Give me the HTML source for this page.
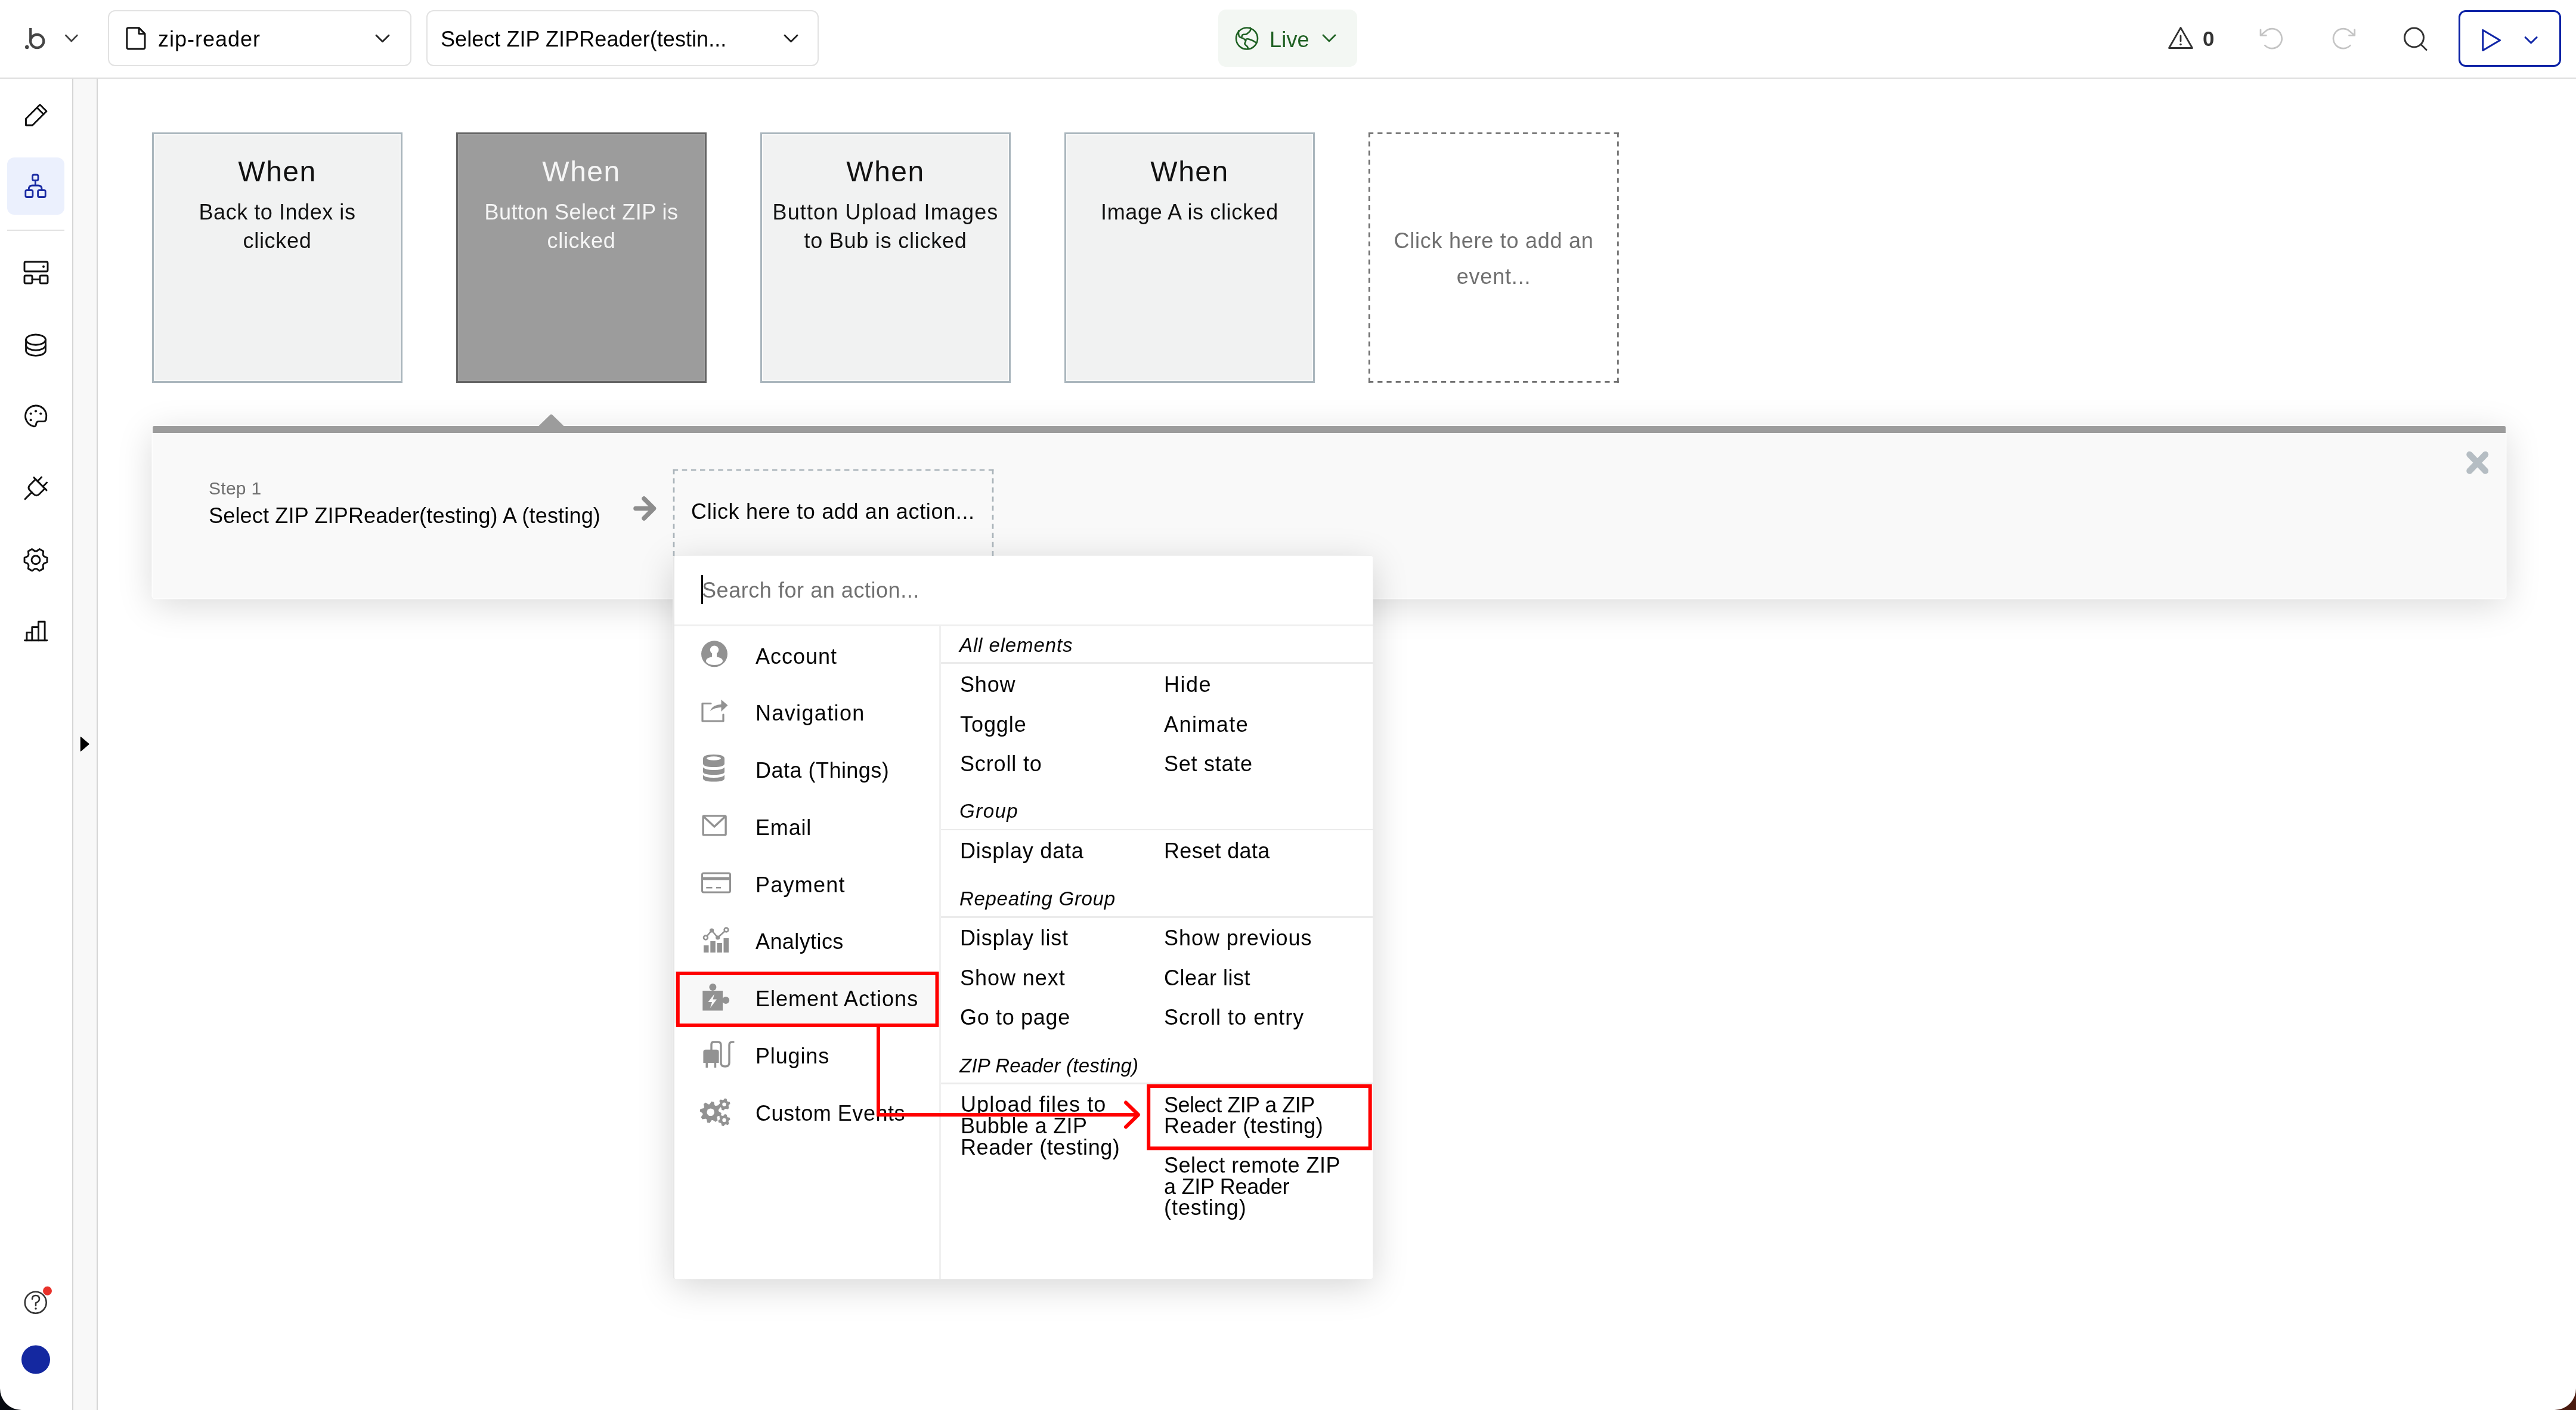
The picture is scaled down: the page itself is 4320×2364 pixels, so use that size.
<!DOCTYPE html>
<html><head><meta charset="utf-8"><style>
html,body{margin:0;padding:0;}
body{width:4320px;height:2364px;overflow:hidden;position:relative;background:linear-gradient(90deg,#060a10 0%,#1a1412 50%,#4a1b10 100%);font-family:"Liberation Sans", sans-serif;}
.a{position:absolute;}
.t{position:absolute;white-space:nowrap;font-family:"Liberation Sans", sans-serif;will-change:transform;}
svg.ov{position:absolute;left:0;top:0;}
</style></head><body>
<div class="a" style="left:0px;top:0px;width:4320px;height:2364px;background:#fff;border-radius:0 0 36px 36px;"></div>
<div class="a" style="left:0px;top:129.5px;width:4320px;height:2px;background:#dedede;"></div>
<div class="a" style="left:181px;top:17px;width:509px;height:94px;box-sizing:border-box;border:2.5px solid #e2e2e2;border-radius:12px;"></div>
<div class="t" style="left:265.00px;top:43.42px;font-size:36px;line-height:45px;color:#050505;letter-spacing:0.98px;">zip-reader</div>
<div class="a" style="left:714.5px;top:17px;width:658.5px;height:94px;box-sizing:border-box;border:2.5px solid #e2e2e2;border-radius:12px;"></div>
<div class="t" style="left:739.00px;top:43.42px;font-size:36px;line-height:45px;color:#050505;letter-spacing:0.06px;">Select ZIP ZIPReader(testin...</div>
<div class="a" style="left:2043px;top:16px;width:233px;height:96px;background:#f3f7f3;border-radius:13px;"></div>
<div class="t" style="left:2129.00px;top:44.12px;font-size:36px;line-height:45px;color:#1f6123;letter-spacing:0.2px;">Live</div>
<div class="t" style="left:3694.00px;top:43.47px;font-size:35px;line-height:44px;color:#333;letter-spacing:0.77px;font-weight:bold;">0</div>
<div class="a" style="left:4122.5px;top:16.8px;width:172.5px;height:95px;box-sizing:border-box;border:3.4px solid #0d23a6;border-radius:12px;"></div>
<div class="a" style="left:120.5px;top:131.5px;width:2px;height:2232.5px;background:#d6d6d6;"></div>
<div class="a" style="left:122.5px;top:131.5px;width:39.5px;height:2232.5px;background:#f8f8f8;"></div>
<div class="a" style="left:162px;top:131.5px;width:2px;height:2232.5px;background:#d6d6d6;"></div>
<div class="a" style="left:12px;top:264px;width:96px;height:96px;background:#ebf0fd;border-radius:12px;"></div>
<div class="a" style="left:12px;top:384.5px;width:96px;height:2px;background:#e2e2e2;"></div>
<div class="a" style="left:255px;top:222px;width:420px;height:420px;box-sizing:border-box;background:#f1f2f2;border:3px solid #aab6bd;box-shadow:inset 0 0 0 1.5px #fafafa;"></div>
<div class="t" style="left:265.00px;width:400px;text-align:center;top:258.36px;font-size:48px;line-height:60px;color:#111;letter-spacing:1.47px;">When</div>
<div class="t" style="left:260.00px;width:410px;text-align:center;top:332.92px;font-size:36px;line-height:45px;color:#111;letter-spacing:0.55px;">Back to Index is</div>
<div class="t" style="left:260.00px;width:410px;text-align:center;top:380.92px;font-size:36px;line-height:45px;color:#111;letter-spacing:0.73px;">clicked</div>
<div class="a" style="left:765px;top:222px;width:420px;height:420px;box-sizing:border-box;background:#9c9c9c;border:3px solid #656565;box-shadow:inset 0 0 0 1.5px #a4a4a4;"></div>
<div class="t" style="left:775.00px;width:400px;text-align:center;top:258.36px;font-size:48px;line-height:60px;color:#f6f6f6;letter-spacing:1.47px;">When</div>
<div class="t" style="left:770.00px;width:410px;text-align:center;top:332.92px;font-size:36px;line-height:45px;color:#f6f6f6;letter-spacing:0.48px;">Button Select ZIP is</div>
<div class="t" style="left:770.00px;width:410px;text-align:center;top:380.92px;font-size:36px;line-height:45px;color:#f6f6f6;letter-spacing:0.73px;">clicked</div>
<div class="a" style="left:1275px;top:222px;width:420px;height:420px;box-sizing:border-box;background:#f1f2f2;border:3px solid #aab6bd;box-shadow:inset 0 0 0 1.5px #fafafa;"></div>
<div class="t" style="left:1285.00px;width:400px;text-align:center;top:258.36px;font-size:48px;line-height:60px;color:#111;letter-spacing:1.47px;">When</div>
<div class="t" style="left:1280.00px;width:410px;text-align:center;top:332.92px;font-size:36px;line-height:45px;color:#111;letter-spacing:1.14px;">Button Upload Images</div>
<div class="t" style="left:1280.00px;width:410px;text-align:center;top:380.92px;font-size:36px;line-height:45px;color:#111;letter-spacing:0.76px;">to Bub is clicked</div>
<div class="a" style="left:1785px;top:222px;width:420px;height:420px;box-sizing:border-box;background:#f1f2f2;border:3px solid #aab6bd;box-shadow:inset 0 0 0 1.5px #fafafa;"></div>
<div class="t" style="left:1795.00px;width:400px;text-align:center;top:258.36px;font-size:48px;line-height:60px;color:#111;letter-spacing:1.47px;">When</div>
<div class="t" style="left:1790.00px;width:410px;text-align:center;top:332.92px;font-size:36px;line-height:45px;color:#111;letter-spacing:0.65px;">Image A is clicked</div>
<div class="t" style="left:2300.00px;width:410px;text-align:center;top:381.02px;font-size:36px;line-height:45px;color:#707070;letter-spacing:0.75px;">Click here to add an</div>
<div class="t" style="left:2300.00px;width:410px;text-align:center;top:441.32px;font-size:36px;line-height:45px;color:#707070;letter-spacing:0.81px;">event...</div>
<div class="a" style="left:256px;top:714px;width:3946px;height:289px;background:#f9f9f9;box-shadow:0 0 0 1.5px #fdfdfd, 0 12px 60px rgba(0,0,0,0.15);border-radius:4px;"></div>
<div class="a" style="left:256px;top:714px;width:3946px;height:12px;background:#9c9c9c;border-radius:3px 3px 0 0;"></div>
<div class="t" style="left:350.00px;top:800.10px;font-size:30px;line-height:38px;color:#6e6e6e;letter-spacing:0.28px;">Step 1</div>
<div class="t" style="left:349.50px;top:842.32px;font-size:36px;line-height:45px;color:#050505;letter-spacing:0.18px;">Select ZIP ZIPReader(testing) A (testing)</div>
<div class="t" style="left:1159.00px;top:834.62px;font-size:36px;line-height:45px;color:#050505;letter-spacing:0.65px;">Click here to add an action...</div>
<div class="a" style="left:1129px;top:932px;width:1173px;height:1212px;background:#fff;box-shadow:0 0 0 1px #f0f0f0, 0 12px 60px rgba(0,0,0,0.17);border-radius:3px;border-left:2px solid #e6e6e6;box-sizing:border-box;"></div>
<div class="t" style="left:1176.50px;top:967.32px;font-size:36px;line-height:45px;color:#707070;letter-spacing:0.55px;">Search for an action...</div>
<div class="a" style="left:1175.5px;top:964px;width:3.2px;height:48.5px;background:#000;"></div>
<div class="a" style="left:1131px;top:1047px;width:1171px;height:2.5px;background:#efefef;"></div>
<div class="a" style="left:1575px;top:1049px;width:2.5px;height:1095px;background:#f0f0f0;"></div>
<div class="a" style="left:1131px;top:1628px;width:444px;height:87px;background:#f8f8f8;"></div>
<div class="t" style="left:1266.50px;top:1077.72px;font-size:36px;line-height:45px;color:#050505;letter-spacing:0.97px;">Account</div>
<div class="t" style="left:1266.50px;top:1173.47px;font-size:36px;line-height:45px;color:#050505;letter-spacing:1.36px;">Navigation</div>
<div class="t" style="left:1266.50px;top:1269.22px;font-size:36px;line-height:45px;color:#050505;letter-spacing:0.48px;">Data (Things)</div>
<div class="t" style="left:1266.50px;top:1364.97px;font-size:36px;line-height:45px;color:#050505;letter-spacing:0.82px;">Email</div>
<div class="t" style="left:1266.50px;top:1460.72px;font-size:36px;line-height:45px;color:#050505;letter-spacing:1.23px;">Payment</div>
<div class="t" style="left:1266.50px;top:1556.47px;font-size:36px;line-height:45px;color:#050505;letter-spacing:0.41px;">Analytics</div>
<div class="t" style="left:1266.50px;top:1652.22px;font-size:36px;line-height:45px;color:#050505;letter-spacing:1.0px;">Element Actions</div>
<div class="t" style="left:1266.50px;top:1747.97px;font-size:36px;line-height:45px;color:#050505;letter-spacing:0.85px;">Plugins</div>
<div class="t" style="left:1266.50px;top:1843.72px;font-size:36px;line-height:45px;color:#050505;letter-spacing:0.54px;">Custom Events</div>
<div class="t" style="left:1608.50px;top:1061.26px;font-size:33px;line-height:41px;color:#050505;letter-spacing:0.89px;font-style:italic;">All elements</div>
<div class="a" style="left:1577.5px;top:1110px;width:724.5px;height:2.5px;background:#ebebeb;"></div>
<div class="t" style="left:1608.50px;top:1339.26px;font-size:33px;line-height:41px;color:#050505;letter-spacing:1.5px;font-style:italic;">Group</div>
<div class="a" style="left:1577.5px;top:1389.5px;width:724.5px;height:2.5px;background:#ebebeb;"></div>
<div class="t" style="left:1608.50px;top:1486.16px;font-size:33px;line-height:41px;color:#050505;letter-spacing:0.69px;font-style:italic;">Repeating Group</div>
<div class="a" style="left:1577.5px;top:1536.2px;width:724.5px;height:2.5px;background:#ebebeb;"></div>
<div class="t" style="left:1608.50px;top:1765.76px;font-size:33px;line-height:41px;color:#050505;letter-spacing:0.22px;font-style:italic;">ZIP Reader (testing)</div>
<div class="a" style="left:1577.5px;top:1815px;width:724.5px;height:2.5px;background:#ebebeb;"></div>
<div class="t" style="left:1610.00px;top:1125.22px;font-size:36px;line-height:45px;color:#050505;letter-spacing:0.8px;">Show</div>
<div class="t" style="left:1951.50px;top:1125.22px;font-size:36px;line-height:45px;color:#050505;letter-spacing:1.5px;">Hide</div>
<div class="t" style="left:1610.00px;top:1191.62px;font-size:36px;line-height:45px;color:#050505;letter-spacing:0.94px;">Toggle</div>
<div class="t" style="left:1951.50px;top:1191.62px;font-size:36px;line-height:45px;color:#050505;letter-spacing:1.45px;">Animate</div>
<div class="t" style="left:1610.00px;top:1258.02px;font-size:36px;line-height:45px;color:#050505;letter-spacing:0.85px;">Scroll to</div>
<div class="t" style="left:1951.50px;top:1258.02px;font-size:36px;line-height:45px;color:#050505;letter-spacing:0.75px;">Set state</div>
<div class="t" style="left:1610.00px;top:1403.52px;font-size:36px;line-height:45px;color:#050505;letter-spacing:0.79px;">Display data</div>
<div class="t" style="left:1951.50px;top:1403.52px;font-size:36px;line-height:45px;color:#050505;letter-spacing:0.36px;">Reset data</div>
<div class="t" style="left:1610.00px;top:1550.12px;font-size:36px;line-height:45px;color:#050505;letter-spacing:0.82px;">Display list</div>
<div class="t" style="left:1951.50px;top:1550.12px;font-size:36px;line-height:45px;color:#050505;letter-spacing:0.95px;">Show previous</div>
<div class="t" style="left:1610.00px;top:1616.52px;font-size:36px;line-height:45px;color:#050505;letter-spacing:0.95px;">Show next</div>
<div class="t" style="left:1951.50px;top:1616.52px;font-size:36px;line-height:45px;color:#050505;letter-spacing:0.51px;">Clear list</div>
<div class="t" style="left:1610.00px;top:1682.92px;font-size:36px;line-height:45px;color:#050505;letter-spacing:0.67px;">Go to page</div>
<div class="t" style="left:1951.50px;top:1682.92px;font-size:36px;line-height:45px;color:#050505;letter-spacing:1.01px;">Scroll to entry</div>
<div class="t" style="left:1610.50px;top:1833.72px;font-size:36px;line-height:36px;color:#050505;letter-spacing:1.09px;">Upload files to</div>
<div class="t" style="left:1610.50px;top:1869.72px;font-size:36px;line-height:36px;color:#050505;letter-spacing:0.35px;">Bubble a ZIP</div>
<div class="t" style="left:1610.50px;top:1905.72px;font-size:36px;line-height:36px;color:#050505;letter-spacing:0.58px;">Reader (testing)</div>
<div class="t" style="left:1951.50px;top:1834.52px;font-size:36px;line-height:36px;color:#050505;letter-spacing:-0.55px;">Select ZIP a ZIP</div>
<div class="t" style="left:1951.50px;top:1870.02px;font-size:36px;line-height:36px;color:#050505;letter-spacing:0.58px;">Reader (testing)</div>
<div class="t" style="left:1951.50px;top:1936.32px;font-size:36px;line-height:36px;color:#050505;letter-spacing:0.46px;">Select remote ZIP</div>
<div class="t" style="left:1951.50px;top:1971.52px;font-size:36px;line-height:36px;color:#050505;letter-spacing:-0.28px;">a ZIP Reader</div>
<div class="t" style="left:1951.50px;top:2006.72px;font-size:36px;line-height:36px;color:#050505;letter-spacing:0.95px;">(testing)</div>
<svg class="ov" width="4320" height="2364" viewBox="0 0 4320 2364">
<clipPath id="abox"><rect x="1100" y="700" width="600" height="232"/></clipPath><g clip-path="url(#abox)"><path d="M1128.65 788 L1666.35 788" fill="none" stroke="#a9b3b9" stroke-width="2.7" stroke-dasharray="8.500 6.620"/><path d="M1128.65 1084 L1666.35 1084" fill="none" stroke="#a9b3b9" stroke-width="2.7" stroke-dasharray="8.500 6.620"/><path d="M1130 786.65 L1130 1085.35" fill="none" stroke="#a9b3b9" stroke-width="2.7" stroke-dasharray="8.500 6.774"/><path d="M1665 786.65 L1665 1085.35" fill="none" stroke="#a9b3b9" stroke-width="2.7" stroke-dasharray="8.500 6.774"/></g>
<g fill="none" stroke="#454545" stroke-width="4.2"><circle cx="62.2" cy="69" r="11.1"/><path d="M51.2 47 V69"/></g><circle cx="45.2" cy="79" r="3.2" fill="#454545"/>
<path d="M110.4 59.3 L119.8 68.9 L129.3 59.3" fill="none" stroke="#454545" stroke-width="2.8" stroke-linecap="round" stroke-linejoin="round"/>
<path d="M233 46.6 H215.5 Q212.8 46.6 212.8 49.3 V79.3 Q212.8 82 215.5 82 H240.3 Q243 82 243 79.3 V56.6 Z M233 46.6 V56.6 H243" fill="none" stroke="#111" stroke-width="2.9" stroke-linejoin="round"/>
<path d="M631 59.3 L641.5 69.8 L652 59.3" fill="none" stroke="#222" stroke-width="2.8" stroke-linecap="round" stroke-linejoin="round"/>
<path d="M1316 59.3 L1326.5 69.8 L1337 59.3" fill="none" stroke="#222" stroke-width="2.8" stroke-linecap="round" stroke-linejoin="round"/>
<g fill="none" stroke="#1f6123" stroke-width="2.6" stroke-linejoin="round" stroke-linecap="round"><circle cx="2091" cy="64.5" r="18"/><path d="M2096.5 46.5 Q2098.5 50 2095.5 53 L2091.5 56.5 Q2090 57.8 2088 57.8 H2085.5 Q2083 58 2082.5 61.5"/><path d="M2077.2 51.5 Q2076.5 59 2078.5 61.5 Q2080 63 2084 64 Q2086 64.5 2087.5 66.5 L2088.7 67.5"/><path d="M2088 67 Q2090 64.5 2094 65.5 Q2100 67 2106.5 71.5"/><path d="M2089.5 67.5 Q2088.5 71 2087.5 72.5 Q2087 74 2089.5 76 Q2093 78.5 2092.8 81.5"/></g>
<path d="M2219 59 L2229 69 L2239 59" fill="none" stroke="#1f6123" stroke-width="2.8" stroke-linecap="round" stroke-linejoin="round"/>
<g fill="none" stroke="#333" stroke-width="2.8" stroke-linejoin="round" stroke-linecap="round"><path d="M3657 46.5 L3676.5 80.5 H3637.5 Z"/><path d="M3657 60 V69"/></g><circle cx="3657" cy="74.5" r="1.8" fill="#333"/>
<g fill="none" stroke="#c4c4c4" stroke-width="2.7" stroke-linecap="round" stroke-linejoin="round"><path d="M3798.4 76.1 A16.5 16.5 0 1 0 3802.05 50.3 L3792 58.5"/><path d="M3791 49.8 V59.4 H3800.3"/></g>
<g fill="none" stroke="#c4c4c4" stroke-width="2.7" stroke-linecap="round" stroke-linejoin="round" transform="translate(7739.8 0) scale(-1 1)"><path d="M3798.4 76.1 A16.5 16.5 0 1 0 3802.05 50.3 L3792 58.5"/><path d="M3791 49.8 V59.4 H3800.3"/></g>
<g fill="none" stroke="#333" stroke-width="3" stroke-linecap="round"><circle cx="4048.5" cy="63" r="16"/><path d="M4060 74.5 L4069 83.5"/></g>
<path d="M4163.8 50.5 V84.5 L4192.5 67.5 Z" fill="none" stroke="#0d23a6" stroke-width="3.1" stroke-linejoin="round"/>
<path d="M4235 62.5 L4244.6 72 L4254.2 62.5" fill="none" stroke="#0d23a6" stroke-width="2.8" stroke-linecap="round" stroke-linejoin="round"/>
<g fill="none" stroke="#111" stroke-width="2.9" stroke-linecap="round" stroke-linejoin="round"><path d="M43.5 199 L67 175.5 L78 186.5 L54.5 210 H43.5 Z"/><path d="M62 180.5 L73 191.5"/></g>
<g fill="none" stroke="#1a2ba3" stroke-width="2.8" stroke-linejoin="round" stroke-linecap="round"><rect x="54.5" y="293" width="9.5" height="9.4" rx="2.5"/><rect x="42.8" y="318.6" width="12.1" height="11.9" rx="2.5"/><rect x="63.6" y="318.6" width="12.6" height="11.9" rx="2.5"/><path d="M59.3 302.4 V311 M48.3 318.6 V317 Q48.3 311 54.3 311 H64 Q70 311 70 317 V318.6"/></g>
<g fill="none" stroke="#111" stroke-width="2.9" stroke-linecap="round" stroke-linejoin="round"><rect x="41" y="439" width="39" height="16" rx="2"/><rect x="41" y="462" width="13" height="13" rx="2"/><rect x="67" y="462" width="13" height="13" rx="2"/><path d="M54 468.5 H67"/></g><circle cx="73" cy="447" r="2" fill="#111"/>
<g fill="none" stroke="#111" stroke-width="2.9" stroke-linecap="round" stroke-linejoin="round"><ellipse cx="60" cy="569.6" rx="16.4" ry="8.6"/><path d="M43.6 569.6 V587.8 A16.4 8.6 0 0 0 76.4 587.8 V569.6"/><path d="M43.6 578.6 A16.4 8.6 0 0 0 76.4 578.6"/></g>
<g fill="none" stroke="#111" stroke-width="2.9" stroke-linecap="round" stroke-linejoin="round"><path d="M77.6 700 A17.6 17.6 0 1 0 55.8 714.6 Q60.2 716 60.6 711 Q61 706.6 65 706.6 H73.2 Q77.6 706.6 77.6 700 Z"/></g><g fill="#111"><circle cx="60" cy="689.3" r="2.1"/><circle cx="51.7" cy="693.5" r="2.1"/><circle cx="68.3" cy="693.5" r="2.1"/><circle cx="51.7" cy="704.2" r="2.1"/></g>
<g fill="none" stroke="#111" stroke-width="2.9" stroke-linecap="round" stroke-linejoin="round" transform="translate(67.45 811.25) rotate(45)"><path d="M-15 0 H15"/><path d="M-6.3 0 V-9.5 M6.3 0 V-9.5"/><path d="M-11 0 V13 Q-11 20 -4 20 H4 Q11 20 11 13 V0"/><path d="M0 20 V36"/></g>
<g fill="none" stroke="#111" stroke-width="2.9" stroke-linecap="round" stroke-linejoin="round"><circle cx="60" cy="938.8" r="7"/><path d="M73.61 932.74 L78.95 935.12 L78.95 942.48 L73.61 944.86 L72.05 947.56 L72.66 953.37 L66.28 957.05 L61.56 953.62 L58.44 953.62 L53.72 957.05 L47.34 953.37 L47.95 947.56 L46.39 944.86 L41.05 942.48 L41.05 935.12 L46.39 932.74 L47.95 930.04 L47.34 924.23 L53.72 920.55 L58.44 923.98 L61.56 923.98 L66.28 920.55 L72.66 924.23 L72.05 930.04 Z"/></g>
<g fill="none" stroke="#111" stroke-width="2.9" stroke-linecap="round" stroke-linejoin="round"><path d="M41.5 1073.8 H78.9"/><path d="M44.9 1073.8 V1060.4 H53.8 V1073.8 M53.8 1060.4 V1051.5 H64.5 V1073.8 M64.5 1051.5 V1042.3 H75.1 V1073.8"/></g>
<path d="M135.5 1236 L149 1247.5 L135.5 1259 Z" fill="#000" stroke="#000" stroke-width="1.5" stroke-linejoin="round"/>
<g fill="none" stroke="#333" stroke-width="2.6" stroke-linecap="round"><circle cx="59.7" cy="2183.8" r="18"/><path d="M54 2178 Q54 2172 60 2172 Q66 2172 66 2178 Q66 2182 60 2184.5 V2189"/></g><circle cx="60" cy="2194" r="1.8" fill="#333"/><circle cx="79.5" cy="2164.3" r="7.5" fill="#e8312a"/>
<circle cx="60" cy="2279.5" r="24" fill="#1428a0"/>
<path d="M2294.9500000000003 223.3 L2714.75 223.3" fill="none" stroke="#6f6f6f" stroke-width="2.7" stroke-dasharray="8.250 6.993"/><path d="M2294.9500000000003 640.4 L2714.75 640.4" fill="none" stroke="#6f6f6f" stroke-width="2.7" stroke-dasharray="8.250 6.993"/><path d="M2296.3 221.95000000000002 L2296.3 641.75" fill="none" stroke="#6f6f6f" stroke-width="2.7" stroke-dasharray="8.250 6.993"/><path d="M2713.4 221.95000000000002 L2713.4 641.75" fill="none" stroke="#6f6f6f" stroke-width="2.7" stroke-dasharray="8.250 6.993"/>
<path d="M903 714.5 L922 696 Q924.4 693.7 926.8 696 L945.8 714.5 Z" fill="#9c9c9c"/>
<g fill="none" stroke="#8d8d8d" stroke-width="7.5" stroke-linecap="round" stroke-linejoin="round"><path d="M1066 852.5 H1095"/><path d="M1080 836 L1096.5 852.5 L1080 869"/></g>
<g stroke="#b5bdc3" stroke-width="10.5" stroke-linecap="round"><path d="M4141.5 762 L4168 789.5 M4168 762 L4141.5 789.5"/></g>
<defs><clipPath id="acc"><circle cx="1198" cy="1096.3" r="22"/></clipPath></defs><circle cx="1198" cy="1096.3" r="22" fill="#929292"/><g fill="#fff"><circle cx="1198" cy="1089.6" r="7.2"/><ellipse cx="1198" cy="1108" rx="14" ry="7"/><rect x="1194" y="1094" width="8" height="8"/></g>
<g fill="none" stroke="#929292" stroke-width="3.2" stroke-linecap="round" stroke-linejoin="round"><path d="M1192 1179.5 H1178 V1209 H1213 V1198"/></g><path d="M1190.5 1192 Q1196 1181 1209.5 1181 V1173 L1220.5 1182.5 L1209.5 1193 V1186 Q1199 1186 1190.5 1192 Z" fill="#929292"/>
<g fill="#929292"><path d="M1179 1272 Q1179 1265 1197 1265 Q1215 1265 1215 1272 V1280 Q1215 1286 1197 1286 Q1179 1286 1179 1280 Z"/><path d="M1179 1286.5 Q1183 1291 1197 1291 Q1211 1291 1215 1286.5 V1294 Q1215 1299 1197 1299 Q1179 1299 1179 1294 Z"/><path d="M1179 1299.5 Q1183 1304 1197 1304 Q1211 1304 1215 1299.5 V1305 Q1215 1310.5 1197 1310.5 Q1179 1310.5 1179 1305 Z"/></g><ellipse cx="1197" cy="1271.5" rx="12" ry="3.2" fill="#fff"/>
<g fill="none" stroke="#929292" stroke-width="3.4" stroke-linejoin="round"><rect x="1179.2" y="1367.9" width="37.9" height="32" rx="1.5"/><path d="M1180 1369 L1198 1386 L1216 1369"/></g>
<g fill="none" stroke="#929292" stroke-width="3" stroke-linejoin="round"><rect x="1177.5" y="1464" width="47" height="32" rx="2.5"/></g><rect x="1177.5" y="1470.5" width="47" height="5" fill="#929292"/><g stroke="#929292" stroke-width="2.6"><path d="M1184.3 1488.2 H1194.5 M1201 1488.2 H1209"/></g>
<g fill="#929292"><rect x="1180" y="1585" width="8.5" height="12"/><rect x="1191.3" y="1578" width="8.5" height="19"/><rect x="1202.4" y="1581" width="8.5" height="16"/><rect x="1213.5" y="1573" width="8.5" height="24"/></g><g fill="none" stroke="#929292" stroke-width="2.6"><path d="M1183.4 1572 L1193.6 1560 L1203.7 1572 L1218 1559"/><circle cx="1183.4" cy="1572" r="3.4" fill="#fff"/><circle cx="1218" cy="1559" r="3.4" fill="#fff"/></g><g fill="#929292"><circle cx="1193.6" cy="1560" r="3.6"/><circle cx="1203.7" cy="1572" r="3.6"/></g>
<g fill="#929292"><rect x="1178.3" y="1661" width="33.7" height="33.4"/><circle cx="1195.4" cy="1655" r="6"/><circle cx="1217.2" cy="1677" r="6"/></g><path d="M1198 1666.5 L1187.5 1680 H1194 L1191 1690 L1202 1675.5 H1195.5 Z" fill="#f8f8f8"/>
<g fill="#929292"><path d="M1179.4 1764 Q1179.4 1759.8 1183.5 1759.8 H1201.5 Q1205.6 1759.8 1205.6 1764 V1782 H1179.4 Z"/><rect x="1183.5" y="1781" width="3.5" height="9"/><rect x="1197.7" y="1781" width="3.5" height="9"/></g><path d="M1193 1760 V1751 Q1193 1747 1197 1747 H1204 Q1209 1747 1209 1752 V1782 Q1209 1788 1216 1788 Q1223 1788 1223 1782 V1752 Q1223 1747 1228 1747 H1230" fill="none" stroke="#929292" stroke-width="3.4" stroke-linecap="round"/>
<path d="M1193.42,1847.38 L1196.78,1848.05 L1197.83,1853.34 L1199.95,1854.75 L1205.23,1853.70 L1207.13,1856.55 L1204.14,1861.03 L1204.64,1863.53 L1209.12,1866.52 L1208.45,1869.88 L1203.16,1870.93 L1201.75,1873.05 L1202.80,1878.33 L1199.95,1880.23 L1195.47,1877.24 L1192.97,1877.74 L1189.98,1882.22 L1186.62,1881.55 L1185.57,1876.26 L1183.45,1874.85 L1178.17,1875.90 L1176.27,1873.05 L1179.26,1868.57 L1178.76,1866.07 L1174.28,1863.08 L1174.95,1859.72 L1180.24,1858.67 L1181.65,1856.55 L1180.60,1851.27 L1183.45,1849.37 L1187.93,1852.36 L1190.43,1851.86 Z" fill="#929292" stroke="#929292" stroke-width="1.2" stroke-linejoin="round"/><circle cx="1191.7" cy="1864.8" r="6.3" fill="#fff"/>
<path d="M1215.74,1842.18 L1218.14,1842.82 L1218.76,1846.05 L1220.05,1847.34 L1223.28,1847.96 L1223.92,1850.36 L1221.44,1852.51 L1220.97,1854.28 L1222.04,1857.38 L1220.28,1859.14 L1217.18,1858.07 L1215.41,1858.54 L1213.26,1861.02 L1210.86,1860.38 L1210.24,1857.15 L1208.95,1855.86 L1205.72,1855.24 L1205.08,1852.84 L1207.56,1850.69 L1208.03,1848.92 L1206.96,1845.82 L1208.72,1844.06 L1211.82,1845.13 L1213.59,1844.66 Z" fill="#929292" stroke="#929292" stroke-width="1.2" stroke-linejoin="round"/><circle cx="1214.5" cy="1851.6" r="3.2" fill="#fff"/>
<path d="M1215.74,1868.58 L1218.14,1869.22 L1218.76,1872.45 L1220.05,1873.74 L1223.28,1874.36 L1223.92,1876.76 L1221.44,1878.91 L1220.97,1880.68 L1222.04,1883.78 L1220.28,1885.54 L1217.18,1884.47 L1215.41,1884.94 L1213.26,1887.42 L1210.86,1886.78 L1210.24,1883.55 L1208.95,1882.26 L1205.72,1881.64 L1205.08,1879.24 L1207.56,1877.09 L1208.03,1875.32 L1206.96,1872.22 L1208.72,1870.46 L1211.82,1871.53 L1213.59,1871.06 Z" fill="#929292" stroke="#929292" stroke-width="1.2" stroke-linejoin="round"/><circle cx="1214.5" cy="1878" r="3.2" fill="#fff"/>
<g fill="none" stroke="#ff0000" stroke-width="6"><rect x="1136.8" y="1632" width="434.7" height="87"/><rect x="1926.2" y="1821" width="371.5" height="104.3"/><path d="M1473 1719 V1869 H1908"/></g><path d="M1888 1848.5 L1909 1869 L1888 1889.5" fill="none" stroke="#ff0000" stroke-width="6" stroke-linecap="round" stroke-linejoin="round"/>
</svg>
</body></html>
